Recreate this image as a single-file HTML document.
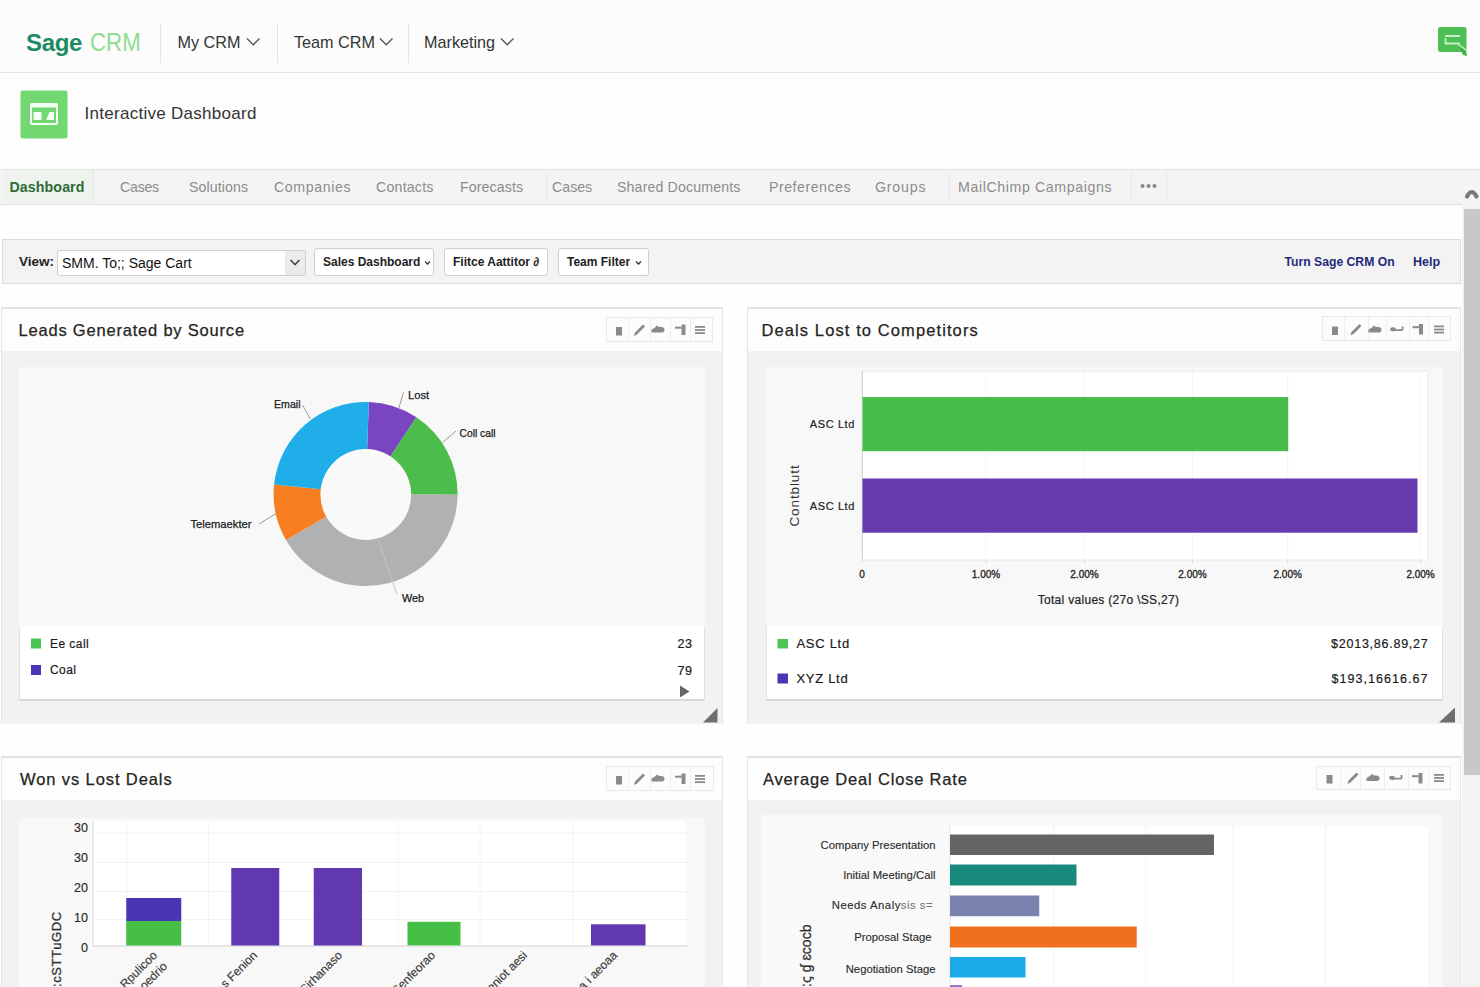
<!DOCTYPE html>
<html><head><meta charset="utf-8">
<style>
*{margin:0;padding:0;box-sizing:border-box}
html,body{width:1480px;height:987px;overflow:hidden;background:#fefefe;font-family:"Liberation Sans",sans-serif;color:#333}
.a{position:absolute}
.t{position:absolute;white-space:nowrap;line-height:1}
#hdr{left:0;top:0;width:1480px;height:73px;background:#fcfcfc;border-bottom:1px solid #e5e5e5}
.vd{position:absolute;width:1px;background:#e4e4e4}
.nav{position:absolute;top:33.5px;font-size:16.2px;letter-spacing:0px;color:#333;line-height:1}
.chev{position:absolute}
#tit{left:0;top:73px;width:1480px;height:96px;background:#fdfdfd}
#tabs{left:0;top:169px;width:1480px;height:36px;background:#f4f4f4;border-top:1px solid #e2e2e2;border-bottom:1px solid #e0e0e0}
.tab{position:absolute;top:9.5px;font-size:14.2px;color:#8c8c8c;line-height:1}
#fbar{left:2px;top:239px;width:1459px;height:45px;background:#f3f3f3;border:1px solid #dcdcdc}
.btn{position:absolute;top:8px;height:28px;background:#fff;border:1px solid #cfcfcf;border-radius:3px;font-weight:bold;font-size:12px;color:#222;line-height:26px;padding-left:8px;white-space:nowrap}
.panel{position:absolute;background:#f1f1f1;border:1px solid #e2e2e2;border-top:2px solid #e2e2e2}
.ph{position:absolute;left:0;top:0;right:0;height:43px;background:#fbfbfb}
.ptitle{position:absolute;left:16px;top:14px;font-size:17.5px;color:#222;line-height:1;white-space:nowrap}
.tools{position:absolute;top:9px;height:25px;border:1px solid #e6e6e6;background:#fcfcfc}
.chart{position:absolute;background:#f7f7f7}
.legend{position:absolute;background:#fff;border-bottom:2px solid #dedede;border-left:1px solid #e4e4e4;border-right:1px solid #e4e4e4}
.lg{position:absolute;font-size:12.5px;color:#222;line-height:1;white-space:nowrap}
.sw{position:absolute;width:10px;height:10px}
</style></head><body>

<!-- header -->
<div id="hdr" class="a">
  <div class="t" style="left:26px;top:30.5px;font-size:24px;font-weight:bold;color:#1e8a62;letter-spacing:-0.3px">Sage</div>
  <div class="t" style="left:90px;top:29px;font-size:26.5px;color:#8fdc8f;transform:scaleX(0.84);transform-origin:0 0">CRM</div>
  <div class="vd" style="left:160px;top:24px;height:39px"></div>
  <div class="nav" style="left:177.5px">My CRM</div>
  <svg class="chev" style="left:246px;top:37px" width="15" height="10"><polyline points="1,1.5 7.25,7.8 13.5,1.5" fill="none" stroke="#555" stroke-width="1.3"/></svg>
  <div class="vd" style="left:277px;top:24px;height:39px"></div>
  <div class="nav" style="left:294px">Team CRM</div>
  <svg class="chev" style="left:379px;top:37px" width="15" height="10"><polyline points="1,1.5 7.25,7.8 13.5,1.5" fill="none" stroke="#555" stroke-width="1.3"/></svg>
  <div class="vd" style="left:408px;top:24px;height:39px"></div>
  <div class="nav" style="left:424px">Marketing</div>
  <svg class="a" style="left:1436px;top:25px" width="32" height="33" viewBox="0 0 32 33">
    <rect x="2" y="2" width="28.5" height="25" rx="2.5" fill="#4cbf55"/>
    <path d="M23 21 L30 26 L31 31 L27 30 Z" fill="#3cb548"/>
    <rect x="9" y="10" width="15" height="2" fill="#c8f0c8"/>
    <path d="M9.5 13 V18.5 H24" fill="none" stroke="#c8f0c8" stroke-width="1.8"/>
    <path d="M22.5 19.5 L30 25" stroke="#c8f0c8" stroke-width="1.5"/>
  </svg>
  <svg class="chev" style="left:500px;top:37px" width="15" height="10"><polyline points="1,1.5 7.25,7.8 13.5,1.5" fill="none" stroke="#555" stroke-width="1.3"/></svg>
</div>

<!-- title -->
<div id="tit" class="a">
  <svg class="a" style="left:20px;top:17px" width="48" height="49" viewBox="0 0 48 49">
    <rect x="0.5" y="0.5" width="47" height="48" rx="2" fill="#72d872"/>
    <rect x="11" y="14" width="26" height="20" rx="1" fill="none" stroke="#f2fff2" stroke-width="2"/>
    <rect x="11" y="13.5" width="26" height="4" fill="#f2fff2"/>
    <rect x="13.5" y="22" width="8" height="8" fill="#f8fff8"/>
    <path d="M26 30 L29.5 22 H34 V30 Z" fill="#f8fff8"/>
  </svg>
  <div class="t" style="left:84.5px;top:32.3px;font-size:17px;letter-spacing:0.28px;color:#333">Interactive Dashboard</div>
</div>

<!-- tabs -->
<div id="tabs" class="a">
  <div class="a" style="left:3px;top:0;width:91px;height:34px;background:#eef3ee;border-right:1px solid #e4e8e4"></div>
  <div class="tab" style="left:9.5px;color:#2e6b36;font-weight:bold;letter-spacing:0.1px">Dashboard</div>
  <div class="tab" style="left:120px;letter-spacing:-0.25px">Cases</div>
  <div class="tab" style="left:189px;letter-spacing:0.1px">Solutions</div>
  <div class="tab" style="left:274px;letter-spacing:0.6px">Companies</div>
  <div class="tab" style="left:376px;letter-spacing:0.2px">Contacts</div>
  <div class="tab" style="left:460px;letter-spacing:0.1px">Forecasts</div>
  <div class="tab" style="left:552px">Cases</div>
  <div class="tab" style="left:617px;letter-spacing:0.13px">Shared Documents</div>
  <div class="tab" style="left:769px;letter-spacing:0.5px">Preferences</div>
  <div class="tab" style="left:875px;letter-spacing:0.8px">Groups</div>
  <div class="tab" style="left:958px;letter-spacing:0.6px">MailChimp Campaigns</div>
  <div class="a" style="left:546px;top:2px;width:1px;height:31px;background:#e8e8e8"></div>
  <div class="a" style="left:949px;top:2px;width:1px;height:31px;background:#e8e8e8"></div>
  <div class="a" style="left:1131px;top:2px;width:1px;height:31px;background:#e8e8e8"></div>
  <div class="a" style="left:1166px;top:2px;width:1px;height:31px;background:#e8e8e8"></div>
  <svg class="a" style="left:1140px;top:13px" width="18" height="6"><circle cx="2.5" cy="3" r="2" fill="#888"/><circle cx="8.5" cy="3" r="2" fill="#888"/><circle cx="14.5" cy="3" r="2" fill="#888"/></svg>
</div>

<!-- scrollbar -->
<div class="a" style="left:1462px;top:204px;width:18px;height:783px;background:#f3f3f3"></div>
<div class="a" style="left:1462px;top:186px;width:18px;height:19px;background:#f5f5f5"></div>
<div class="a" style="left:1464px;top:209px;width:16px;height:566px;background:#c8c8c8"></div>
<svg class="a" style="left:1462px;top:184px" width="18" height="18"><path d="M5 12.5 Q9.8 3.5 14.5 12.5" fill="none" stroke="#7a7a7a" stroke-width="4.2" stroke-linecap="round"/></svg>

<!-- filter bar -->
<div id="fbar" class="a">
  <div class="t" style="left:16px;top:14.5px;font-size:13.5px;font-weight:bold;color:#222">View:</div>
  <div class="a" style="left:54px;top:10px;width:249px;height:26px;background:#fff;border:1px solid #cfcfcf;border-radius:2px"></div>
  <div class="a" style="left:282px;top:11px;width:20px;height:24px;background:#ebebeb"></div>
  <svg class="a" style="left:286px;top:18px" width="12" height="9"><polyline points="1.5,2 6,6.5 10.5,2" fill="none" stroke="#444" stroke-width="1.6"/></svg>
  <div class="t" style="left:59px;top:15.5px;font-size:14px;color:#111">SMM. To;; Sage Cart</div>
  <div class="btn" style="left:311px;width:120px">Sales Dashboard</div>
  <svg class="a" style="left:421px;top:20px" width="8" height="6"><polyline points="1,1.5 3.5,4 6,1.5" fill="none" stroke="#333" stroke-width="1.3"/></svg>
  <div class="btn" style="left:441px;width:104px">Fiitce Aattitor &#8706;</div>
  <div class="btn" style="left:555px;width:91px">Team Filter</div>
  <svg class="a" style="left:632px;top:20px" width="8" height="6"><polyline points="1,1.5 3.5,4 6,1.5" fill="none" stroke="#333" stroke-width="1.3"/></svg>
  <div class="t" style="left:1281.5px;top:16px;font-size:12.2px;font-weight:bold;color:#1f2a7c">Turn Sage CRM On</div>
  <div class="t" style="left:1410px;top:16px;font-size:12.5px;font-weight:bold;color:#1f2a7c">Help</div>
</div>

<!-- PANELS -->
<div class="a" style="left:1px;top:307px;width:722px;height:417px;background:#f2f2f2;border:1px solid #e6e6e6;border-bottom:none;border-top:2px solid #e2e2e2"></div>
<div class="a" style="left:2px;top:309px;width:720px;height:42px;background:#fdfdfd"></div>
<div class="t" style="left:18.5px;top:321.5px;font-size:16.5px;letter-spacing:0.8px;color:#242424;-webkit-text-stroke:0.25px #242424">Leads Generated by Source</div>
<div class="a" style="left:606px;top:317px;width:107px;height:25px;border:1px solid #e9e9e9;background:#fcfcfc"></div>
<div class="a" style="left:628px;top:318px;width:1px;height:23px;background:#efefef"></div>
<div class="a" style="left:650px;top:318px;width:1px;height:23px;background:#efefef"></div>
<div class="a" style="left:670px;top:318px;width:1px;height:23px;background:#efefef"></div>
<div class="a" style="left:690px;top:318px;width:1px;height:23px;background:#efefef"></div>
<svg class="a" style="left:0;top:0" width="1480" height="987">
<rect x="616" y="327" width="6" height="8.5" fill="#8a8a8a"/>
<path d="M634.0 336 L635.0 332.5 L643.0 324.5 L645.0 326.5 L637.0 334.5 Z" fill="#8a8a8a"/>
<path d="M651.5 332.5 L651.5 329.5 Q655 328 657 325.5 Q659 327.5 661 327 Q665 327 664.5 330.5 Q664 332.5 662 332.5 Z" fill="#8a8a8a"/>
<rect x="675" y="326.7" width="6.5" height="2" fill="#8a8a8a"/><rect x="681.5" y="324.5" width="4" height="10.5" fill="#8a8a8a"/>
<rect x="695" y="326" width="10" height="1.8" fill="#8a8a8a"/><rect x="695" y="329.1" width="10" height="1.8" fill="#8a8a8a"/><rect x="695" y="332.2" width="10" height="1.8" fill="#8a8a8a"/>
</svg>
<div class="a" style="left:19px;top:367px;width:686px;height:259px;background:#f8f8f8"></div>
<div class="a" style="left:19px;top:626px;width:686px;height:75px;background:#fff;border-left:1px solid #e2e2e2;border-right:1px solid #e2e2e2;border-bottom:2px solid #d8d8d8"></div>
<svg class="a" style="left:0;top:0" width="1480" height="987">
<path d="M368.81 402.06 A92 92 0 0 1 416.38 417.28 L390.16 456.89 A44.5 44.5 0 0 0 367.15 449.53 Z" fill="#7a45c0"/>
<path d="M416.38 417.28 A92 92 0 0 1 457.60 494.80 L410.10 494.39 A44.5 44.5 0 0 0 390.16 456.89 Z" fill="#4cbd4a"/>
<path d="M457.60 494.80 A92 92 0 0 1 285.93 540.00 L327.06 516.25 A44.5 44.5 0 0 0 410.10 494.39 Z" fill="#b1b1b3"/>
<path d="M285.93 540.00 A92 92 0 0 1 274.10 484.38 L321.34 489.35 A44.5 44.5 0 0 0 327.06 516.25 Z" fill="#f77f22"/>
<path d="M274.10 484.38 A92 92 0 0 1 368.81 402.06 L367.15 449.53 A44.5 44.5 0 0 0 321.34 489.35 Z" fill="#1faee9"/>
<circle cx="365.8" cy="494.5" r="45.4" fill="#f9f9f9"/>
<line x1="302.5" y1="405" x2="310" y2="418.5" stroke="#9a9a9a" stroke-width="1"/>
<line x1="403.5" y1="392.5" x2="398.5" y2="409" stroke="#9a9a9a" stroke-width="1"/>
<line x1="456" y1="431" x2="442.5" y2="442.5" stroke="#9a9a9a" stroke-width="1"/>
<line x1="259" y1="524" x2="276" y2="513.5" stroke="#9a9a9a" stroke-width="1"/>
<line x1="397" y1="594.5" x2="378" y2="540" stroke="#c4c4c4" stroke-width="1"/>
<g font-family="Liberation Sans" font-size="11.2" fill="#1a1a1a" stroke="#1a1a1a" stroke-width="0.25">
<text x="274" y="407.5" font-size="10.6">Email</text><text x="408" y="399">Lost</text><text x="459.5" y="437" font-size="10.3">Coll call</text><text x="190.5" y="527.5">Telemaekter</text><text x="402" y="602" font-size="10.8">Web</text>
</g>
<rect x="31" y="638.5" width="10" height="10" fill="#4cc552"/><rect x="31" y="665" width="10" height="10" fill="#4b35b5"/>
<g font-family="Liberation Sans" font-size="12" fill="#1a1a1a" stroke="#1a1a1a" stroke-width="0.2" letter-spacing="0.45"><text x="50" y="648">Ee call</text><text x="50" y="674">Coal</text><text x="692.5" y="648" text-anchor="end" font-size="12.6" letter-spacing="0.5">23</text><text x="692.5" y="674.5" text-anchor="end" font-size="12.6" letter-spacing="0.5">79</text></g>
<path d="M680 685.5 L689.5 691.5 L680 697.5 Z" fill="#666"/>
<path d="M703 722.5 L717.5 708 L717.5 722.5 Z" fill="#6e6e6e"/>
</svg>
<div class="a" style="left:747px;top:307px;width:714px;height:417px;background:#f2f2f2;border:1px solid #e6e6e6;border-bottom:none;border-top:2px solid #e2e2e2"></div>
<div class="a" style="left:748px;top:309px;width:712px;height:42px;background:#fdfdfd"></div>
<div class="t" style="left:761.5px;top:321.5px;font-size:16.5px;letter-spacing:1.1px;color:#242424;-webkit-text-stroke:0.25px #242424">Deals Lost to Competitors</div>
<div class="a" style="left:1322px;top:316px;width:129px;height:25px;border:1px solid #e9e9e9;background:#fcfcfc"></div>
<div class="a" style="left:1344px;top:317px;width:1px;height:23px;background:#efefef"></div>
<div class="a" style="left:1368px;top:317px;width:1px;height:23px;background:#efefef"></div>
<div class="a" style="left:1386px;top:317px;width:1px;height:23px;background:#efefef"></div>
<div class="a" style="left:1409px;top:317px;width:1px;height:23px;background:#efefef"></div>
<div class="a" style="left:1428px;top:317px;width:1px;height:23px;background:#efefef"></div>
<svg class="a" style="left:0;top:0" width="1480" height="987">
<rect x="1332" y="326.5" width="6" height="8.5" fill="#8a8a8a"/>
<path d="M1350.5 335.5 L1351.5 332.0 L1359.5 324.0 L1361.5 326.0 L1353.5 334.0 Z" fill="#8a8a8a"/>
<path d="M1368.5 332.5 L1368.5 329.5 Q1372 328 1374 325.5 Q1376 327.5 1378 327 Q1382 327 1381.5 330.5 Q1381 332.5 1379 332.5 Z" fill="#8a8a8a"/>
<ellipse cx="1393" cy="329.3" rx="2.8" ry="2" fill="#8a8a8a"/><path d="M1393 330.2 H1401.5 Q1403 330.2 1402.5 326.5" fill="none" stroke="#8a8a8a" stroke-width="1.8"/>
<rect x="1412.5" y="326.2" width="6.5" height="2" fill="#8a8a8a"/><rect x="1419.0" y="324" width="4" height="10.5" fill="#8a8a8a"/>
<rect x="1434" y="325.5" width="10" height="1.8" fill="#8a8a8a"/><rect x="1434" y="328.6" width="10" height="1.8" fill="#8a8a8a"/><rect x="1434" y="331.7" width="10" height="1.8" fill="#8a8a8a"/>
</svg>
<div class="a" style="left:766px;top:367px;width:677px;height:259px;background:#f8f8f8"></div>
<div class="a" style="left:766px;top:626px;width:677px;height:75px;background:#fff;border-left:1px solid #e2e2e2;border-right:1px solid #e2e2e2;border-bottom:2px solid #d8d8d8"></div>
<svg class="a" style="left:0;top:0" width="1480" height="987">
<rect x="862" y="371" width="566" height="189" fill="#fff" stroke="#e8e8e8" stroke-width="1"/>
<line x1="986" y1="371" x2="986" y2="560" stroke="#f5f5f5" stroke-width="1"/>
<line x1="986" y1="560" x2="986" y2="564" stroke="#dddddd" stroke-width="1"/>
<line x1="1084.5" y1="371" x2="1084.5" y2="560" stroke="#f5f5f5" stroke-width="1"/>
<line x1="1084.5" y1="560" x2="1084.5" y2="564" stroke="#dddddd" stroke-width="1"/>
<line x1="1192.5" y1="371" x2="1192.5" y2="560" stroke="#f5f5f5" stroke-width="1"/>
<line x1="1192.5" y1="560" x2="1192.5" y2="564" stroke="#dddddd" stroke-width="1"/>
<line x1="1287.7" y1="371" x2="1287.7" y2="560" stroke="#f5f5f5" stroke-width="1"/>
<line x1="1287.7" y1="560" x2="1287.7" y2="564" stroke="#dddddd" stroke-width="1"/>
<line x1="1420.6" y1="371" x2="1420.6" y2="560" stroke="#f5f5f5" stroke-width="1"/>
<line x1="1420.6" y1="560" x2="1420.6" y2="564" stroke="#dddddd" stroke-width="1"/>
<line x1="862.5" y1="371" x2="862.5" y2="561" stroke="#d6d6d6" stroke-width="1"/>
<rect x="862.5" y="397" width="425.7" height="54.2" fill="#49bd4b"/>
<rect x="862.5" y="478.5" width="555" height="54.2" fill="#673bb0"/>
<g font-family="Liberation Sans" font-size="10" fill="#222" stroke="#222" stroke-width="0.3" text-anchor="middle">
<text x="862" y="578">0</text>
<text x="986" y="578">1.00%</text>
<text x="1084.5" y="578">2.00%</text>
<text x="1192.5" y="578">2.00%</text>
<text x="1287.7" y="578">2.00%</text>
<text x="1420.6" y="578">2.00%</text>
</g>
<g font-family="Liberation Sans" font-size="11" fill="#222" stroke="#222" stroke-width="0.2" letter-spacing="0.6"><text x="855" y="428" text-anchor="end">ASC Ltd</text><text x="855" y="510" text-anchor="end">ASC Ltd</text>
<text x="1108.5" y="603.5" text-anchor="middle" font-size="12" letter-spacing="0.3">Total values (27o \SS,27)</text></g>
<text transform="translate(798.5,495.5) rotate(-90)" font-family="Liberation Sans" font-size="13.5" letter-spacing="0.9" fill="#333" text-anchor="middle">Contblutt</text>
<rect x="777.5" y="639" width="10.5" height="9.5" fill="#4cc552"/><rect x="777.5" y="673.5" width="10.5" height="10" fill="#4b35b5"/>
<g font-family="Liberation Sans" font-size="13" fill="#1a1a1a" stroke="#1a1a1a" stroke-width="0.2" letter-spacing="0.7"><text x="796.5" y="648">ASC Ltd</text><text x="796.5" y="683">XYZ Ltd</text>
<text x="1428.5" y="648" text-anchor="end" font-size="12.5" letter-spacing="0.75">$2013,86.89,27</text><text x="1428.5" y="683" text-anchor="end" font-size="12.5" letter-spacing="1.05">$193,16616.67</text></g>
<path d="M1439 722.5 L1455 707.5 L1455 722.5 Z" fill="#6e6e6e"/>
</svg>
<div class="a" style="left:1px;top:756px;width:722px;height:244px;background:#f2f2f2;border:1px solid #e6e6e6;border-bottom:none;border-top:2px solid #e2e2e2"></div>
<div class="a" style="left:2px;top:758px;width:720px;height:42px;background:#fdfdfd"></div>
<div class="t" style="left:20px;top:771px;font-size:16.5px;letter-spacing:0.9px;color:#242424;-webkit-text-stroke:0.25px #242424">Won vs Lost Deals</div>
<div class="a" style="left:606px;top:766px;width:107.5px;height:25px;border:1px solid #e9e9e9;background:#fcfcfc"></div>
<div class="a" style="left:628px;top:767px;width:1px;height:23px;background:#efefef"></div>
<div class="a" style="left:650px;top:767px;width:1px;height:23px;background:#efefef"></div>
<div class="a" style="left:670px;top:767px;width:1px;height:23px;background:#efefef"></div>
<div class="a" style="left:690px;top:767px;width:1px;height:23px;background:#efefef"></div>
<svg class="a" style="left:0;top:0" width="1480" height="987">
<rect x="616" y="776" width="6" height="8.5" fill="#8a8a8a"/>
<path d="M634.0 785 L635.0 781.5 L643.0 773.5 L645.0 775.5 L637.0 783.5 Z" fill="#8a8a8a"/>
<path d="M651.5 781.5 L651.5 778.5 Q655 777 657 774.5 Q659 776.5 661 776 Q665 776 664.5 779.5 Q664 781.5 662 781.5 Z" fill="#8a8a8a"/>
<rect x="675" y="775.7" width="6.5" height="2" fill="#8a8a8a"/><rect x="681.5" y="773.5" width="4" height="10.5" fill="#8a8a8a"/>
<rect x="695" y="775" width="10" height="1.8" fill="#8a8a8a"/><rect x="695" y="778.1" width="10" height="1.8" fill="#8a8a8a"/><rect x="695" y="781.2" width="10" height="1.8" fill="#8a8a8a"/>
</svg>
<div class="a" style="left:19px;top:818px;width:686px;height:180px;background:#f8f8f8"></div>
<svg class="a" style="left:0;top:0" width="1480" height="987">
<rect x="93" y="821" width="594" height="125" fill="#fff"/>
<line x1="93" y1="833" x2="687" y2="833" stroke="#f2f2f2" stroke-width="1"/>
<line x1="93" y1="862.5" x2="687" y2="862.5" stroke="#f2f2f2" stroke-width="1"/>
<line x1="93" y1="891.5" x2="687" y2="891.5" stroke="#f2f2f2" stroke-width="1"/>
<line x1="93" y1="919.5" x2="687" y2="919.5" stroke="#f2f2f2" stroke-width="1"/>
<line x1="127" y1="821" x2="127" y2="946" stroke="#f4f4f4" stroke-width="1"/>
<line x1="208.5" y1="821" x2="208.5" y2="946" stroke="#f4f4f4" stroke-width="1"/>
<line x1="398" y1="821" x2="398" y2="946" stroke="#f4f4f4" stroke-width="1"/>
<line x1="480" y1="821" x2="480" y2="946" stroke="#f4f4f4" stroke-width="1"/>
<line x1="573" y1="821" x2="573" y2="946" stroke="#f4f4f4" stroke-width="1"/>
<line x1="687" y1="821" x2="687" y2="946" stroke="#f4f4f4" stroke-width="1"/>
<line x1="93" y1="821" x2="93" y2="946" stroke="#d8d8d8" stroke-width="1"/><line x1="93" y1="946" x2="687" y2="946" stroke="#d0d0d0" stroke-width="1.2"/>
<rect x="126.25" y="898" width="55" height="23" fill="#4b35b5"/><rect x="126.25" y="921" width="55" height="24.5" fill="#46bf46"/>
<rect x="231.25" y="868" width="48" height="77.5" fill="#6238b0"/><rect x="313.75" y="868" width="48.25" height="77.5" fill="#6238b0"/>
<rect x="407.5" y="921.8" width="53" height="23.6" fill="#46bf46"/><rect x="591" y="924.3" width="54.5" height="21.1" fill="#6238b0"/>
<g font-family="Liberation Sans" font-size="12.5" fill="#2a2a2a" stroke="#2a2a2a" stroke-width="0.15" text-anchor="end">
<text x="88" y="831.8">30</text>
<text x="88" y="861.8">30</text>
<text x="88" y="891.8">20</text>
<text x="88" y="921.8">10</text>
<text x="88" y="951.8">0</text>
</g>
<g font-family="Liberation Sans" font-size="12" fill="#3a3a3a" stroke="#3a3a3a" stroke-width="0.15">
<text transform="translate(158,956) rotate(-45)" text-anchor="end">Rpulicoo</text>
<text transform="translate(258,956) rotate(-45)" text-anchor="end">s Fenion</text>
<text transform="translate(343,956) rotate(-45)" text-anchor="end">Sirhanaso</text>
<text transform="translate(436,956) rotate(-45)" text-anchor="end">Senfeorao</text>
<text transform="translate(528,956) rotate(-45)" text-anchor="end">Meniot aesi</text>
<text transform="translate(618,956) rotate(-45)" text-anchor="end">a i aeoaa</text>
<text transform="translate(168,967) rotate(-45)" text-anchor="end">ooedrio</text>
</g>
<text transform="translate(61,987) rotate(-90)" font-family="Liberation Sans" font-size="13" letter-spacing="0.6" fill="#333" stroke="#333" stroke-width="0.3">:cSTTuGDC</text>
</svg>
<div class="a" style="left:747px;top:756px;width:714px;height:244px;background:#f2f2f2;border:1px solid #e6e6e6;border-bottom:none;border-top:2px solid #e2e2e2"></div>
<div class="a" style="left:748px;top:758px;width:712px;height:42px;background:#fdfdfd"></div>
<div class="t" style="left:763px;top:771px;font-size:16.5px;letter-spacing:0.82px;color:#242424;-webkit-text-stroke:0.25px #242424">Average Deal Close Rate</div>
<div class="a" style="left:1316px;top:766px;width:135px;height:24px;border:1px solid #e9e9e9;background:#fcfcfc"></div>
<div class="a" style="left:1340px;top:767px;width:1px;height:22px;background:#efefef"></div>
<div class="a" style="left:1360px;top:767px;width:1px;height:22px;background:#efefef"></div>
<div class="a" style="left:1384px;top:767px;width:1px;height:22px;background:#efefef"></div>
<div class="a" style="left:1408px;top:767px;width:1px;height:22px;background:#efefef"></div>
<div class="a" style="left:1428px;top:767px;width:1px;height:22px;background:#efefef"></div>
<svg class="a" style="left:0;top:0" width="1480" height="987">
<rect x="1326.5" y="775" width="6" height="8.5" fill="#8a8a8a"/>
<path d="M1347.5 784 L1348.5 780.5 L1356.5 772.5 L1358.5 774.5 L1350.5 782.5 Z" fill="#8a8a8a"/>
<path d="M1366.5 781.0 L1366.5 778.0 Q1370 776.5 1372 774.0 Q1374 776.0 1376 775.5 Q1380 775.5 1379.5 779.0 Q1379 781.0 1377 781.0 Z" fill="#8a8a8a"/>
<ellipse cx="1392" cy="777.8" rx="2.8" ry="2" fill="#8a8a8a"/><path d="M1392 778.7 H1400.5 Q1402 778.7 1401.5 775.0" fill="none" stroke="#8a8a8a" stroke-width="1.8"/>
<rect x="1412" y="775.2" width="6.5" height="2" fill="#8a8a8a"/><rect x="1418.5" y="773" width="4" height="10.5" fill="#8a8a8a"/>
<rect x="1434" y="774" width="10" height="1.8" fill="#8a8a8a"/><rect x="1434" y="777.1" width="10" height="1.8" fill="#8a8a8a"/><rect x="1434" y="780.2" width="10" height="1.8" fill="#8a8a8a"/>
</svg>
<div class="a" style="left:761px;top:815px;width:681px;height:185px;background:#f9f9f9"></div>
<svg class="a" style="left:0;top:0" width="1480" height="987">
<rect x="950" y="826" width="479.5" height="170" fill="#fff"/>
<line x1="1053.75" y1="826" x2="1053.75" y2="987" stroke="#f3f3f3" stroke-width="1"/>
<line x1="1145.7" y1="826" x2="1145.7" y2="987" stroke="#f3f3f3" stroke-width="1"/>
<line x1="1233" y1="826" x2="1233" y2="987" stroke="#f3f3f3" stroke-width="1"/>
<line x1="1325.4" y1="826" x2="1325.4" y2="987" stroke="#f3f3f3" stroke-width="1"/>
<line x1="1429.4" y1="826" x2="1429.4" y2="987" stroke="#f3f3f3" stroke-width="1"/>
<line x1="950" y1="826" x2="950" y2="987" stroke="#e4e4e4" stroke-width="1"/>
<rect x="950" y="834.5" width="264" height="20.5" fill="#646464"/>
<rect x="950" y="864.5" width="126.5" height="21.0" fill="#178a7c"/>
<rect x="950" y="895.5" width="89.25" height="20.75" fill="#7a82ae"/>
<rect x="950" y="926.5" width="186.70000000000005" height="21.0" fill="#f07020"/>
<rect x="950" y="957" width="75.5" height="20.5" fill="#1aabe8"/>
<rect x="950" y="985" width="12" height="5" fill="#9a7ad0"/>
<g font-family="Liberation Sans" font-size="11.3" fill="#2a2a2a" stroke="#2a2a2a" stroke-width="0.12" text-anchor="end">
<text x="935.5" y="848.5">Company Presentation</text>
<text x="935.5" y="878.5">Initial Meeting/Call</text>
<text x="931.5" y="941">Proposal Stage</text>
<text x="935.5" y="972.7">Negotiation Stage</text>
<text x="933" y="909" letter-spacing="0.5">Needs Analy<tspan fill="#777" stroke="#777">sis s=</tspan></text>
</g>
<text transform="translate(811,987) rotate(-90)" font-family="Liberation Sans" font-size="14" fill="#333" stroke="#333" stroke-width="0.3">:ꞔ ɠ ɛcocb</text>
</svg>
<!-- /PANELS -->
</body></html>
